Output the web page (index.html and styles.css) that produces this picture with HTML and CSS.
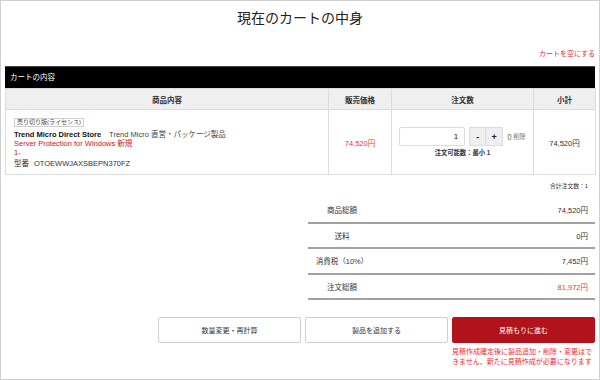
FILE: index.html
```html
<!DOCTYPE html>
<html lang="ja">
<head>
    <meta charset="UTF-8">
    <meta name="viewport" content="width=device-width, initial-scale=1.0">
    <title>現在のカートの中身</title>
    <link rel="stylesheet" href="styles.css">
</head>
<body>
    <div class="page">
        <h1 class="title">現在のカートの中身</h1>

        <div class="clear-cart"><a href="#">カートを空にする</a></div>

        <div class="cart-head">カートの内容</div>

        <table class="cart">
            <colgroup>
                <col class="w-item">
                <col class="w-price">
                <col class="w-qty">
                <col class="w-sub">
            </colgroup>
            <thead>
                <tr>
                    <th>商品内容</th>
                    <th>販売価格</th>
                    <th>注文数</th>
                    <th>小計</th>
                </tr>
            </thead>
            <tbody>
                <tr>
                    <td class="item">
                        <div class="item-body">
                            <span class="badge">売り切り版(ライセンス)</span>
                            <div class="maker"><b>Trend Micro Direct Store</b><span class="shop">Trend Micro 直営・パッケージ製品</span></div>
                            <div class="name">Server Protection for Windows 新規</div>
                            <div class="name">1-</div>
                            <div class="sku">型番<span class="code">OTOEWWJAXSBEPN370FZ</span></div>
                        </div>
                    </td>
                    <td class="price">74,520円</td>
                    <td class="qty">
                        <div class="qty-row">
                            <input class="qty-input" type="text" value="1">
                            <div class="stepper">
                                <button class="step">-</button>
                                <button class="step">+</button>
                            </div>
                            <a class="remove" href="#">
                                <svg width="5" height="6" viewBox="0 0 10 12"><path d="M1 2h8M3.5 2V0.8h3V2M2 3l0.6 8.2h4.8L8 3" fill="none" stroke="#777" stroke-width="1.4"/></svg>
                                削除
                            </a>
                        </div>
                        <div class="qty-note">注文可能数：最小 1</div>
                    </td>
                    <td class="subtotal">74,520円</td>
                </tr>
            </tbody>
        </table>

        <div class="count">合計注文数：1</div>

        <div class="summary">
            <div class="sum-row"><span class="sum-label">商品総額</span><span class="sum-value">74,520円</span></div>
            <div class="sum-row"><span class="sum-label">送料</span><span class="sum-value">0円</span></div>
            <div class="sum-row"><span class="sum-label">消費税（10%）</span><span class="sum-value">7,452円</span></div>
            <div class="sum-row"><span class="sum-label">注文総額</span><span class="sum-value total">81,972円</span></div>
        </div>

        <div class="actions">
            <div class="action"><button class="btn">数量変更・再計算</button></div>
            <div class="action"><button class="btn">製品を追加する</button></div>
            <div class="action">
                <button class="btn btn-primary">見積もりに進む</button>
                <p class="warn">見積作成確定後に製品追加・削除・変更はできません、新たに見積作成が必要になります</p>
            </div>
        </div>
    </div>
</body>
</html>
```

FILE: styles.css
```css
body {
    margin: 0;
    padding: 0;
    font-family: "Liberation Sans", "Noto Sans CJK JP", sans-serif;
    color: #333;
    background: #fff;
}

.page {
    width: 600px;
    height: 380px;
    box-sizing: border-box;
    border: 1px solid #cfcfcf;
    padding: 0 4px;
    overflow: hidden;
}

.title {
    margin: 0;
    padding-top: 8px;
    font-size: 14px;
    line-height: 18px;
    font-weight: normal;
    text-align: center;
    color: #222;
}

.clear-cart {
    margin: 22px 0 7px;
    text-align: right;
    font-size: 7px;
    line-height: 10px;
}
.clear-cart a {
    color: #d8323a;
    text-decoration: none;
}

.cart-head {
    height: 22px;
    line-height: 22px;
    padding-left: 5px;
    background: #000;
    border-top: 1px solid #444;
    box-sizing: border-box;
    color: #fff;
    font-size: 7.5px;
}

.cart {
    width: 100%;
    table-layout: fixed;
    border-collapse: collapse;
    font-size: 7.5px;
}
.w-item { width: 323px; }
.w-price { width: 63px; }
.w-qty { width: 142px; }
.w-sub { width: 62px; }

.cart th {
    height: 20px;
    padding: 0;
    background: #efefef;
    border: 1px solid #dcdcdc;
    font-weight: bold;
    color: #333;
}
.cart tbody tr {
    height: 65px;
}
.cart td {
    padding: 0;
    border: 1px solid #dcdcdc;
    vertical-align: middle;
    text-align: center;
}

.cart td.item {
    text-align: left;
    vertical-align: top;
}
.item-body {
    padding: 8px 8px 0;
    line-height: 9px;
}

.badge {
    display: inline-block;
    vertical-align: top;
    border: 1px solid #cfcfcf;
    padding: 0 2px;
    font-size: 6px;
    line-height: 7px;
    color: #444;
    margin-bottom: 3px;
}

.maker,
.name,
.sku {
    height: 9px;
    line-height: 9px;
}
.maker b {
    color: #111;
}
.shop {
    margin-left: 8px;
    color: #444;
}
.name {
    color: #c4171f;
}
.sku {
    margin-top: 2px;
    color: #333;
}
.code {
    margin-left: 5px;
}

.price {
    color: #f2333b;
}

.qty-row {
    display: flex;
    justify-content: center;
    align-items: center;
}
.qty-input {
    width: 66px;
    height: 19px;
    box-sizing: border-box;
    border: 1px solid #dcdcdc;
    border-radius: 2px;
    padding: 0 6px;
    text-align: right;
    font-family: inherit;
    font-size: 8px;
    color: #222;
}
.stepper {
    display: flex;
    margin-left: 4px;
}
.step {
    width: 17px;
    height: 19px;
    padding: 0;
    border: 1px solid #dcdcdc;
    background: #efefef;
    font-family: inherit;
    font-size: 9px;
    font-weight: bold;
    color: #222;
}
.step + .step {
    border-left: none;
}
.remove {
    display: flex;
    align-items: center;
    gap: 1px;
    margin-left: 4px;
    font-size: 6.3px;
    color: #777;
    text-decoration: none;
}
.qty-note {
    margin-top: 3px;
    font-size: 6.3px;
    line-height: 8px;
    font-weight: bold;
}

.count {
    margin: 7px 7px 8px 0;
    text-align: right;
    font-size: 5.8px;
    line-height: 8px;
}

.summary {
    margin-left: 303px;
    font-size: 7.5px;
}
.sum-row {
    display: flex;
    align-items: center;
    height: 23.5px;
    border-bottom: 2px solid #a0a0a0;
}
.sum-label {
    width: 68px;
    text-align: center;
}
.sum-value {
    flex: 1;
    text-align: right;
    padding-right: 7px;
}
.sum-value.total {
    color: #f2333b;
}

.actions {
    display: flex;
    justify-content: flex-end;
    align-items: flex-start;
    gap: 4px;
    margin-top: 17px;
}
.action {
    width: 143px;
}
.btn {
    display: block;
    width: 100%;
    height: 26px;
    border: 1px solid #cfcfcf;
    border-radius: 2px;
    background: #fff;
    font-family: inherit;
    font-size: 7px;
    color: #333;
}
.btn-primary {
    background: #b0131b;
    border-color: #b0131b;
    color: #fff;
}
.warn {
    margin: 4px 0 0;
    font-size: 7px;
    line-height: 10px;
    color: #ec2a32;
}
```
